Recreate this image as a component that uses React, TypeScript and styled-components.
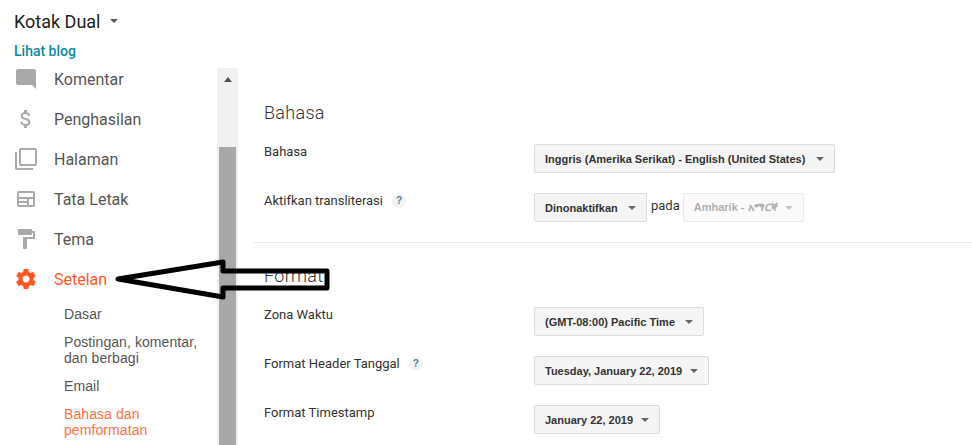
import React from "react";
import styled, { createGlobalStyle } from "styled-components";

const GlobalStyle = createGlobalStyle`
  html, body {
    margin: 0;
    padding: 0;
    background: #fff;
  }
`;

const navItems = [
  {
    label: "Komentar",
    path: "M21.99 4c0-1.1-.89-2-1.99-2H4c-1.1 0-2 .9-2 2v12c0 1.1.9 2 2 2h14l4 4-.01-18z",
  },
  {
    label: "Penghasilan",
    path: "M11.8 10.9c-2.27-.59-3-1.2-3-2.15 0-1.09 1.01-1.85 2.7-1.85 1.78 0 2.44.85 2.5 2.1h2.21c-.07-1.72-1.12-3.3-3.21-3.81V3h-3v2.16c-1.94.42-3.5 1.68-3.5 3.61 0 2.31 1.91 3.46 4.7 4.13 2.5.6 3 1.48 3 2.41 0 .69-.49 1.79-2.7 1.79-2.06 0-2.87-.92-2.98-2.1h-2.2c.12 2.19 1.76 3.42 3.68 3.83V21h3v-2.15c1.95-.37 3.5-1.5 3.5-3.55 0-2.84-2.43-3.81-4.7-4.4z",
  },
  {
    label: "Halaman",
    path: "M3 5H1v16c0 1.1.9 2 2 2h16v-2H3V5zm18-4H7c-1.1 0-2 .9-2 2v14c0 1.1.9 2 2 2h14c1.1 0 2-.9 2-2V3c0-1.1-.9-2-2-2zm0 16H7V3h14v14z",
  },
  {
    label: "Tata Letak",
    path: "M19 4H5c-1.1 0-2 .9-2 2v12c0 1.1.9 2 2 2h14c1.1 0 2-.9 2-2V6c0-1.1-.9-2-2-2zM5 12h8v2H5v-2zm0 6v-2h8v2H5zm14 0h-4v-6h4v6zm0-8H5V6h14v4z",
  },
  {
    label: "Tema",
    path: "M18 4V3c0-.55-.45-1-1-1H5c-.55 0-1 .45-1 1v4c0 .55.45 1 1 1h12c.55 0 1-.45 1-1V6h1v4H9v11c0 .55.45 1 1 1h2c.55 0 1-.45 1-1v-9h8V4h-3z",
  },
  {
    label: "Setelan",
    active: true,
    path: "M19.43 12.98c.04-.32.07-.64.07-.98s-.03-.66-.07-.98l2.11-1.65c.19-.15.24-.42.12-.64l-2-3.46c-.12-.22-.39-.3-.61-.22l-2.49 1c-.52-.4-1.08-.73-1.69-.98l-.38-2.65C14.46 2.18 14.25 2 14 2h-4c-.25 0-.46.18-.49.42l-.38 2.65c-.61.25-1.17.59-1.69.98l-2.49-1c-.23-.09-.49 0-.61.22l-2 3.46c-.13.22-.07.49.12.64l2.11 1.65c-.04.32-.07.65-.07.98s.03.66.07.98l-2.11 1.65c-.19.15-.24.42-.12.64l2 3.46c.12.22.39.3.61.22l2.49-1c.52.4 1.08.73 1.69.98l.38 2.65c.03.24.24.42.49.42h4c.25 0 .46-.18.49-.42l.38-2.65c.61-.25 1.17-.59 1.69-.98l2.49 1c.23.09.49 0 .61-.22l2-3.46c.12-.22.07-.49-.12-.64l-2.11-1.65zM12 15.5c-1.93 0-3.5-1.57-3.5-3.5s1.57-3.5 3.5-3.5 3.5 1.57 3.5 3.5-1.57 3.5-3.5 3.5z",
  },
];

const subItems = [
  { label: "Dasar" },
  { label: "Postingan, komentar, dan berbagi" },
  { label: "Email" },
  { label: "Bahasa dan pemformatan", active: true },
];

const App: React.FC = () => {
  return (
    <Page>
      <GlobalStyle />
      <Header>
        <BlogTitle>
          Kotak Dual
          <TitleCaret />
        </BlogTitle>
        <BlogLink>Lihat blog</BlogLink>
      </Header>
      <Body>
        <Sidebar>
          <NavList>
            {navItems.map((item) => (
              <NavRow key={item.label} $active={item.active}>
                <NavIcon viewBox="0 0 24 24">
                  <path d={item.path} />
                </NavIcon>
                {item.label}
              </NavRow>
            ))}
          </NavList>
          <SubList>
            {subItems.map((item) => (
              <SubItem key={item.label} $active={item.active}>
                {item.label}
              </SubItem>
            ))}
          </SubList>
        </Sidebar>
        <ScrollTrack>
          <ScrollUp />
          <ScrollThumb />
        </ScrollTrack>
        <Main>
          <SectionTitle>Bahasa</SectionTitle>
          <Rows>
            <Row>
              <RowLabel>Bahasa</RowLabel>
              <Select $width={301}>Inggris (Amerika Serikat) - English (United States)</Select>
            </Row>
            <Row>
              <RowLabel>
                Aktifkan transliterasi
                <Help>?</Help>
              </RowLabel>
              <Select $width={113}>Dinonaktifkan</Select>
              <Pada>pada</Pada>
              <Select $width={121} $disabled>
                Amharik - አማርኛ
              </Select>
            </Row>
          </Rows>
          <Divider />
          <SectionTitle>Format</SectionTitle>
          <Rows>
            <Row>
              <RowLabel>Zona Waktu</RowLabel>
              <Select $width={170}>(GMT-08:00) Pacific Time</Select>
            </Row>
            <Row>
              <RowLabel>
                Format Header Tanggal
                <Help>?</Help>
              </RowLabel>
              <Select $width={175}>Tuesday, January 22, 2019</Select>
            </Row>
            <Row>
              <RowLabel>Format Timestamp</RowLabel>
              <Select $width={126}>January 22, 2019</Select>
            </Row>
          </Rows>
        </Main>
      </Body>
      <Arrow viewBox="0 0 972 445">
        <path d="M118 279 L223 262 L223 271 L327 271 L327 288 L223 288 L223 297 Z" />
      </Arrow>
    </Page>
  );
};

export default App;

const Page = styled.div`
  position: relative;
  width: 972px;
  height: 445px;
  overflow: hidden;
  display: flex;
  flex-direction: column;
  font-family: Roboto, "Liberation Sans", sans-serif;
`;

const Header = styled.header`
  height: 68px;
  box-sizing: border-box;
  padding: 9px 14px 0;
  flex-shrink: 0;
`;

const BlogTitle = styled.div`
  display: flex;
  align-items: center;
  height: 24px;
  font-size: 18px;
  color: #212121;
`;

const TitleCaret = styled.span`
  margin-left: 9px;
  border-style: solid;
  border-width: 4px 4px 0;
  border-color: #555 transparent transparent;
`;

const BlogLink = styled.a`
  display: block;
  margin-top: 9px;
  font-size: 14px;
  line-height: 18px;
  font-weight: 500;
  color: #0b8a9e;
`;

const Body = styled.div`
  flex: 1;
  display: flex;
  min-height: 0;
`;

const Sidebar = styled.nav`
  width: 217px;
  flex-shrink: 0;
  overflow: hidden;
`;

const NavList = styled.div`
  margin-top: -9px;
`;

const NavRow = styled.div<{ $active?: boolean }>`
  height: 40px;
  display: flex;
  align-items: center;
  padding-left: 14px;
  font-size: 16px;
  color: ${(p) => (p.$active ? "#ff5722" : "#555")};
  fill: ${(p) => (p.$active ? "#ff5722" : "#aaa")};
`;

const NavIcon = styled.svg`
  width: 24px;
  height: 24px;
  margin-right: 16px;
  flex-shrink: 0;
`;

const SubList = styled.div`
  display: flex;
  flex-direction: column;
  gap: 12px;
  padding: 7px 16px 0 64px;
`;

const SubItem = styled.div<{ $active?: boolean }>`
  font-family: "Liberation Sans", Arial, sans-serif;
  font-size: 14px;
  line-height: 16px;
  letter-spacing: 0.08px;
  color: ${(p) => (p.$active ? "#ff7043" : "#555")};
`;

const ScrollTrack = styled.div`
  width: 21px;
  flex-shrink: 0;
  background: #f1f1f1;
  display: flex;
  flex-direction: column;
  align-items: center;
`;

const ScrollUp = styled.span`
  margin-top: 9px;
  border-style: solid;
  border-width: 0 4.5px 5px;
  border-color: transparent transparent #505050;
`;

const ScrollThumb = styled.div`
  width: 17px;
  margin-top: 65px;
  flex: 1;
  background: #a8a8a8;
`;

const Main = styled.main`
  flex: 1;
  min-width: 0;
  padding: 33px 0 0 15px;
  overflow: hidden;
`;

const SectionTitle = styled.h2`
  margin: 0 0 0 11px;
  font-size: 18px;
  line-height: 24px;
  font-weight: 300;
  letter-spacing: 0.3px;
  color: #333;
`;

const Rows = styled.div`
  display: flex;
  flex-direction: column;
  gap: 20px;
  margin: 19px 0 0 11px;
`;

const Row = styled.div`
  display: flex;
  height: 29px;
`;

const RowLabel = styled.div`
  width: 270px;
  flex-shrink: 0;
  display: flex;
  align-items: flex-start;
  font-size: 13px;
  line-height: 15px;
  color: #333;
`;

const Help = styled.span`
  width: 14px;
  height: 14px;
  margin: 1px 0 0 9px;
  border-radius: 50%;
  background: #f3f3f3;
  color: #4a8a9a;
  font: bold 10px/14px "Liberation Sans", Arial, sans-serif;
  text-align: center;
`;

const Select = styled.div<{ $disabled?: boolean; $width: number }>`
  display: flex;
  align-items: center;
  justify-content: space-between;
  width: ${(p) => p.$width}px;
  height: 29px;
  box-sizing: border-box;
  padding: 0 10px;
  border: 1px solid ${(p) => (p.$disabled ? "#eaeaea" : "#dcdcdc")};
  border-radius: 2px;
  background: ${(p) => (p.$disabled ? "#fafafa" : "#f5f5f5")};
  color: ${(p) => (p.$disabled ? "#b0b0b0" : "#333")};
  font-family: "Liberation Sans", Arial, "Noto Sans", "DejaVu Sans", sans-serif;
  font-size: 11px;
  font-weight: bold;
  white-space: nowrap;

  &::after {
    content: "";
    border-style: solid;
    border-width: 4px 4px 0;
    border-color: ${(p) => (p.$disabled ? "#c4c4c4" : "#666")} transparent transparent;
  }
`;

const Pada = styled.span`
  margin: 5px 3px 0 4px;
  font-size: 13px;
  line-height: 15px;
  color: #333;
`;

const Divider = styled.hr`
  margin: 20px 0 21px;
  height: 1px;
  border: 0;
  background: #ebebeb;
`;

const Arrow = styled.svg`
  position: absolute;
  inset: 0;
  width: 972px;
  height: 445px;
  pointer-events: none;

  path {
    fill: none;
    stroke: #000;
    stroke-width: 5;
    stroke-linejoin: round;
  }
`;
